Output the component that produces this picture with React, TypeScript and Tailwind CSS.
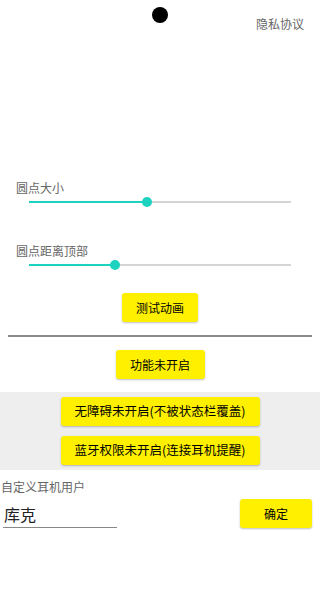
import React from "react";

const font = { fontFamily: '"Noto Sans CJK SC", "Noto Sans", sans-serif' };

function Slider({ pct }: { pct: number }) {
  return (
    <div className="relative mx-[29px] h-[12px]">
      <div className="absolute left-0 right-0 top-[5px] h-[2px] bg-[#d4d4d4]" />
      <div
        className="absolute left-0 top-[5px] h-[2px] bg-[#1dd3c0]"
        style={{ width: `${pct}%` }}
      />
      <div
        className="absolute top-[1px] h-[10px] w-[10px] -translate-x-1/2 rounded-full bg-[#1dd3c0]"
        style={{ left: `${pct}%` }}
      />
    </div>
  );
}

function YellowButton({
  children,
  className = "",
}: {
  children: React.ReactNode;
  className?: string;
}) {
  return (
    <button
      className={
        "h-[29px] rounded-[3px] bg-[#fff000] font-normal text-black shadow-[0_1px_2px_rgba(0,0,0,0.25)] " +
        className
      }
    >
      {children}
    </button>
  );
}

export default function App() {
  return (
    <div className="min-h-[599px] w-[320px] bg-white" style={font}>
      {/* top bar */}
      <div className="relative h-[40px]">
        <div className="flex justify-center pt-[7px]">
          <div className="h-[16px] w-[16px] rounded-full bg-black" />
        </div>
        <span className="absolute right-[16px] top-[16px] text-[12px] leading-[16px] text-[#666]">
          隐私协议
        </span>
      </div>

      {/* sliders */}
      <div className="pt-[140px]">
        <div className="pl-[16px] text-[12px] leading-[16px] text-[#666]">圆点大小</div>
        <Slider pct={45} />
        <div className="mt-[35px] pl-[16px] text-[12px] leading-[16px] text-[#666]">
          圆点距离顶部
        </div>
        <Slider pct={33} />
      </div>

      <div className="mt-[22px] flex justify-center">
        <YellowButton className="w-[76px] text-[12px]">测试动画</YellowButton>
      </div>

      <div className="mx-[8px] mt-[13px] h-[2px] bg-[#8a8a8a]" />

      <div className="mt-[13px] flex justify-center">
        <YellowButton className="w-[89px] text-[12px]">功能未开启</YellowButton>
      </div>

      <div className="mt-[13px] flex flex-col items-center gap-[10px] bg-[#eeeeee] py-[5px]">
        <YellowButton className="w-[199px] text-[12.5px]">无障碍未开启(不被状态栏覆盖)</YellowButton>
        <YellowButton className="w-[199px] text-[12.5px]">蓝牙权限未开启(连接耳机提醒)</YellowButton>
      </div>

      <div className="mt-[9px] pl-[1px] text-[12px] leading-[16px] text-[#666]">自定义耳机用户</div>
      <div className="flex items-start justify-between pl-[3px] pr-[8px] pt-[4px]">
        <div className="mt-[4px] w-[114px] border-b border-[#888] pb-[2px] pl-[1px] text-[16px] leading-[22px] text-[#222]">
          库克
        </div>
        <YellowButton className="w-[72px] text-[12px]">确定</YellowButton>
      </div>
    </div>
  );
}
